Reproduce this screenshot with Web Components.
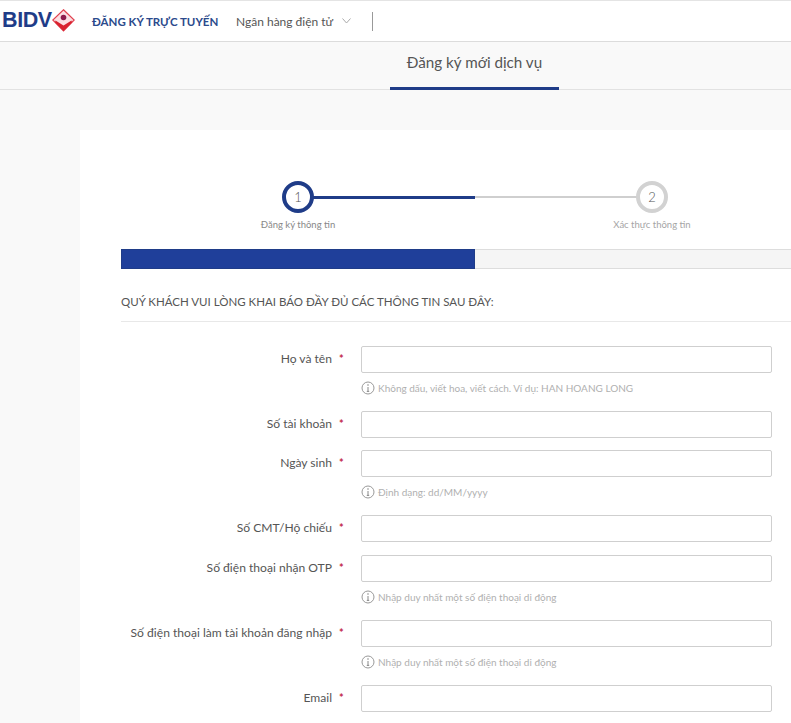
<!DOCTYPE html>
<html lang="vi">
<head>
<meta charset="utf-8">
<title>BIDV - Đăng ký mới dịch vụ</title>
<style>
    html, body { margin: 0; padding: 0; overflow: hidden; height: 723px; }
    body { background: #f9f9f9; font-family: Lato, "Open Sans", sans-serif; color: #444; }
</style>
</head>
<body>
<bidv-header></bidv-header>
<bidv-tabs>Đăng ký mới dịch vụ</bidv-tabs>
<bidv-card>
    <bidv-stepper></bidv-stepper>
    <bidv-progress></bidv-progress>
    <bidv-heading>QUÝ KHÁCH VUI LÒNG KHAI BÁO ĐẦY ĐỦ CÁC THÔNG TIN SAU ĐÂY:</bidv-heading>
    <bidv-form>
        <form-row>Họ và tên<span slot="hint">Không dấu, viết hoa, viết cách. Ví dụ: HAN HOANG LONG</span></form-row>
        <form-row>Số tài khoản</form-row>
        <form-row>Ngày sinh<span slot="hint">Định dạng: dd/MM/yyyy</span></form-row>
        <form-row>Số CMT/Hộ chiếu</form-row>
        <form-row>Số điện thoại nhận OTP<span slot="hint">Nhập duy nhất một số điện thoại di động</span></form-row>
        <form-row>Số điện thoại làm tài khoản đăng nhập<span slot="hint">Nhập duy nhất một số điện thoại di động</span></form-row>
        <form-row>Email</form-row>
    </bidv-form>
</bidv-card>

<script>
// Top bar with logo and menu
class BidvHeader extends HTMLElement {
    connectedCallback() {
        this.attachShadow({ mode: 'open' });
        this.shadowRoot.innerHTML = `
            <style>
                :host {
                    display: flex;
                    align-items: center;
                    height: 40px;
                    background: #fff;
                    border-top: 1px solid #e4e4e4;
                    border-bottom: 1px solid #dcdcdc;
                    box-sizing: content-box;
                }
                .logo {
                    display: flex;
                    align-items: center;
                    width: 92px;
                    padding-left: 2px;
                    box-sizing: border-box;
                }
                .word {
                    font-family: "Liberation Sans", sans-serif;
                    font-weight: 700;
                    font-size: 21.5px;
                    letter-spacing: -0.4px;
                    color: #1f3c88;
                    line-height: 1;
                }
                svg.mark { margin-bottom: 2px; }
                .title {
                    width: 144px;
                    font-size: 11.5px;
                    font-weight: 700;
                    color: #2b4a8c;
                    white-space: nowrap;
                }
                .menu {
                    display: flex;
                    align-items: center;
                    gap: 9px;
                    font-size: 12px;
                    color: #555;
                    white-space: nowrap;
                }
                .sep {
                    width: 1px;
                    height: 19px;
                    background: #999;
                    margin-left: 21px;
                }
            </style>
            <div class="logo">
                <span class="word">BIDV</span>
                <svg class="mark" width="23" height="23" viewBox="0 0 23 23">
                    <path d="M11.5 0.8 L22.2 11 L11.5 22 L0.8 11 Z" fill="#fbdfe3" stroke="#e0414f" stroke-width="1.2"/>
                    <circle cx="11.5" cy="8.5" r="2.8" fill="#8e1c4c"/>
                    <path d="M3.5 11.5 L11.5 16.5 L19.5 11.5 L20 13.5 L11.5 22 L3 13.5 Z" fill="#d9222f"/>
                </svg>
            </div>
            <div class="title">ĐĂNG KÝ TRỰC TUYẾN</div>
            <div class="menu">
                <span>Ngân hàng điện tử</span>
                <svg width="9" height="6" viewBox="0 0 9 6"><path d="M0.5 0.5 L4.5 5 L8.5 0.5" fill="none" stroke="#aaa" stroke-width="1"/></svg>
            </div>
            <div class="sep"></div>
        `;
    }
}

// Tab band under the top bar
class BidvTabs extends HTMLElement {
    connectedCallback() {
        this.attachShadow({ mode: 'open' });
        this.shadowRoot.innerHTML = `
            <style>
                :host {
                    display: block;
                    height: 48px;
                    padding-left: 390px;
                    border-bottom: 1px solid #e2e2e2;
                    box-sizing: border-box;
                }
                .tab {
                    display: flex;
                    justify-content: center;
                    align-items: center;
                    width: 169px;
                    height: 48px;
                    box-sizing: border-box;
                    padding-bottom: 5px;
                    border-bottom: 3px solid #1f3c88;
                    font-size: 15.2px;
                    color: #555;
                    white-space: nowrap;
                }
            </style>
            <div class="tab"><slot></slot></div>
        `;
    }
}

// White panel, its content is wider than the window and gets cut at the right
class BidvCard extends HTMLElement {
    connectedCallback() {
        this.attachShadow({ mode: 'open' });
        this.shadowRoot.innerHTML = `
            <style>
                :host {
                    display: block;
                    margin: 40px 0 0 80px;
                    padding: 51px 0 0 41px;
                    background: #fff;
                    box-sizing: border-box;
                    height: 600px;
                    overflow: hidden;
                }
            </style>
            <slot></slot>
        `;
    }
}

class BidvStepper extends HTMLElement {
    connectedCallback() {
        this.attachShadow({ mode: 'open' });
        this.shadowRoot.innerHTML = `
            <style>
                :host {
                    display: grid;
                    grid-template-columns: 354px 354px;
                    width: 708px;
                    height: 68px;
                }
                .step {
                    display: flex;
                    flex-direction: column;
                    align-items: center;
                    position: relative;
                }
                .step::after {
                    content: '';
                    position: absolute;
                    top: 15px;
                    height: 3px;
                    background: #1f3c88;
                }
                .step.one::after { left: 50%; right: 0; }
                .step.two::after { left: 0; right: 50%; height: 2px; background: #cfcfcf; }
                .dot {
                    width: 32px;
                    height: 32px;
                    box-sizing: border-box;
                    border: 4px solid #1f3c88;
                    border-radius: 50%;
                    background: #fff;
                    display: flex;
                    justify-content: center;
                    align-items: center;
                    font-size: 13px;
                    font-weight: 300;
                    color: #555;
                    position: relative;
                    z-index: 1;
                }
                .two .dot { border-color: #d2d2d2; }
                .name {
                    margin-top: 6px;
                    font-size: 9.5px;
                    color: #888;
                    white-space: nowrap;
                }
                .two .name { color: #a5a5a5; }
            </style>
            <div class="step one"><div class="dot">1</div><div class="name">Đăng ký thông tin</div></div>
            <div class="step two"><div class="dot">2</div><div class="name">Xác thực thông tin</div></div>
        `;
    }
}

class BidvProgress extends HTMLElement {
    connectedCallback() {
        this.attachShadow({ mode: 'open' });
        this.shadowRoot.innerHTML = `
            <style>
                :host {
                    display: block;
                    width: 708px;
                    height: 20px;
                    box-sizing: border-box;
                    background: #f5f5f5;
                    border-top: 1px solid #ddd;
                    border-bottom: 1px solid #ddd;
                }
                .fill {
                    width: 354px;
                    height: calc(100% + 2px);
                    margin-top: -1px;
                    background: #1f3f9a;
                    box-shadow: 0 0 0 1px #1f3c88 inset;
                }
            </style>
            <div class="fill"></div>
        `;
    }
}

class BidvHeading extends HTMLElement {
    connectedCallback() {
        this.attachShadow({ mode: 'open' });
        this.shadowRoot.innerHTML = `
            <style>
                :host {
                    display: block;
                    width: 708px;
                    height: 53px;
                    box-sizing: border-box;
                    padding-top: 26px;
                    border-bottom: 1px solid #e8e8e8;
                    font-size: 11.5px;
                    line-height: 14px;
                    color: #555;
                    white-space: nowrap;
                }
            </style>
            <slot></slot>
        `;
    }
}

class BidvForm extends HTMLElement {
    connectedCallback() {
        this.attachShadow({ mode: 'open' });
        this.shadowRoot.innerHTML = `
            <style>
                :host {
                    display: flex;
                    flex-direction: column;
                    padding-top: 24px;
                }
            </style>
            <slot></slot>
        `;
    }
}

// One label + input line, with an optional hint below the input
class FormRow extends HTMLElement {
    connectedCallback() {
        const hasHint = !!this.querySelector('[slot="hint"]');
        this.attachShadow({ mode: 'open' });
        this.shadowRoot.innerHTML = `
            <style>
                :host {
                    display: grid;
                    grid-template-columns: 240px 411px;
                    margin-bottom: ${hasHint ? '12px' : '12.4px'};
                }
                .label {
                    display: flex;
                    justify-content: flex-end;
                    align-items: center;
                    height: 25px;
                    padding-right: 9px;
                    font-size: 12.1px;
                    color: #555;
                    white-space: nowrap;
                }
                .star {
                    width: 13px;
                    margin-left: 7px;
                    color: #c2274a;
                    font-weight: 700;
                    font-size: 11px;
                }
                input {
                    display: block;
                    width: 411px;
                    height: 27px;
                    box-sizing: border-box;
                    border: 1px solid #cfcfcf;
                    border-radius: 2px;
                    background: #fff;
                    padding: 0 8px;
                    margin: 0;
                }
                .hint {
                    display: flex;
                    align-items: center;
                    gap: 3px;
                    height: 14px;
                    margin-top: 8px;
                    margin-bottom: 4px;
                    font-size: 10px;
                    color: #b0b0b0;
                    white-space: nowrap;
                }
                svg { flex: none; }
            </style>
            <div class="label"><slot></slot><span class="star">*</span></div>
            <div>
                <input type="text">
                ${hasHint ? `<div class="hint">
                    <svg width="14" height="14" viewBox="0 0 14 14">
                        <circle cx="7" cy="7" r="6" fill="none" stroke="#999" stroke-width="1"/>
                        <path d="M7 6 V10.2 M5.8 10.4 H8.2" fill="none" stroke="#888" stroke-width="1"/>
                        <circle cx="7" cy="4" r="0.8" fill="#888"/>
                    </svg>
                    <slot name="hint"></slot>
                </div>` : ''}
            </div>
        `;
    }
}

customElements.define('bidv-header', BidvHeader);
customElements.define('bidv-tabs', BidvTabs);
customElements.define('bidv-card', BidvCard);
customElements.define('bidv-stepper', BidvStepper);
customElements.define('bidv-progress', BidvProgress);
customElements.define('bidv-heading', BidvHeading);
customElements.define('bidv-form', BidvForm);
customElements.define('form-row', FormRow);
</script>
</body>
</html>
